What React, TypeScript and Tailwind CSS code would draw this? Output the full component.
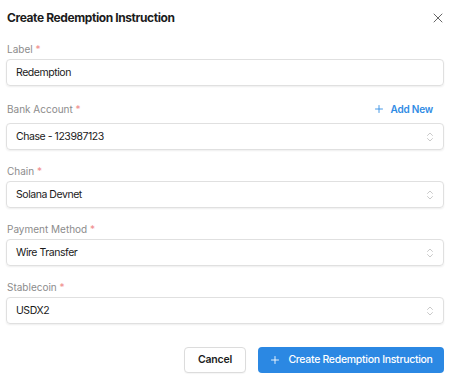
import { Plus, X, ChevronsUpDown } from "lucide-react";

const fields = [
  { label: "Bank Account", value: "Chase - 123987123", addNew: true },
  { label: "Chain", value: "Solana Devnet" },
  { label: "Payment Method", value: "Wire Transfer" },
  { label: "Stablecoin", value: "USDX2" },
];

function FieldLabel({ text }: { text: string }) {
  return (
    <span className="text-[10px] leading-[14px] text-[#8c8c8c]">
      {text} <span className="text-[#f08c8c]">*</span>
    </span>
  );
}

const box =
  "h-[27px] flex items-center justify-between pl-[9px] pr-[7px] border border-[#e0e0e0] rounded-[4px] shadow-[0_1px_2px_rgba(0,0,0,0.07)] text-[10.5px] tracking-[-0.45px] text-[#1a1a1a]";

export default function App() {
  return (
    <div
      className="w-[456px] h-[387px] bg-white text-[#1c1c1c] border-b border-[#d4d4d4]"
      style={{ fontFamily: "Inter, 'Noto Sans', sans-serif" }}
    >
      <div className="flex items-center justify-between h-[20px] mt-[8px] pl-[7px] pr-[10px]">
        <h1 className="text-[12px] font-bold tracking-[-0.4px]">Create Redemption Instruction</h1>
        <X className="w-[16px] h-[16px] text-[#666]" strokeWidth={1.5} />
      </div>

      <div className="pl-[6px] pr-[12px] mt-[14px]">
        <div className="flex items-center pl-[1px] h-[14px]">
          <FieldLabel text="Label" />
        </div>
        <div className={`mt-[3px] ${box}`}>Redemption</div>

        {fields.map((f) => (
          <div key={f.label} className={f.addNew ? "mt-[13px]" : "mt-[14px]"}>
            <div
              className={`flex items-center justify-between pl-[1px] ${
                f.addNew ? "h-[20px]" : "h-[14px]"
              }`}
            >
              <FieldLabel text={f.label} />
              {f.addNew && (
                <span className="flex items-center gap-[6px] text-[10px] font-semibold tracking-[-0.2px] text-[#2f8be4] pr-[11px]">
                  <Plus className="w-[12px] h-[12px]" strokeWidth={1.75} />
                  Add New
                </span>
              )}
            </div>
            <div className={`${f.addNew ? "mt-[4px]" : "mt-[3px]"} ${box}`}>
              <span>{f.value}</span>
              <ChevronsUpDown className="w-[12px] h-[12px] text-[#b8b8b8]" strokeWidth={1.5} />
            </div>
          </div>
        ))}
      </div>

      <div className="flex justify-end gap-[12px] pr-[12px] mt-[23px]">
        <button className="h-[26px] w-[62px] border border-[#dcdcdc] rounded-[4px] text-[10.5px] font-semibold tracking-[-0.2px] bg-white shadow-[0_1px_1px_rgba(0,0,0,0.04)]">
          Cancel
        </button>
        <button className="h-[26px] w-[186px] flex items-center justify-center gap-[7px] rounded-[4px] bg-[#2b88e3] text-white text-[10.5px] font-medium tracking-[-0.3px]">
          <Plus className="w-[12px] h-[12px]" strokeWidth={1.75} />
          Create Redemption Instruction
        </button>
      </div>
    </div>
  );
}
